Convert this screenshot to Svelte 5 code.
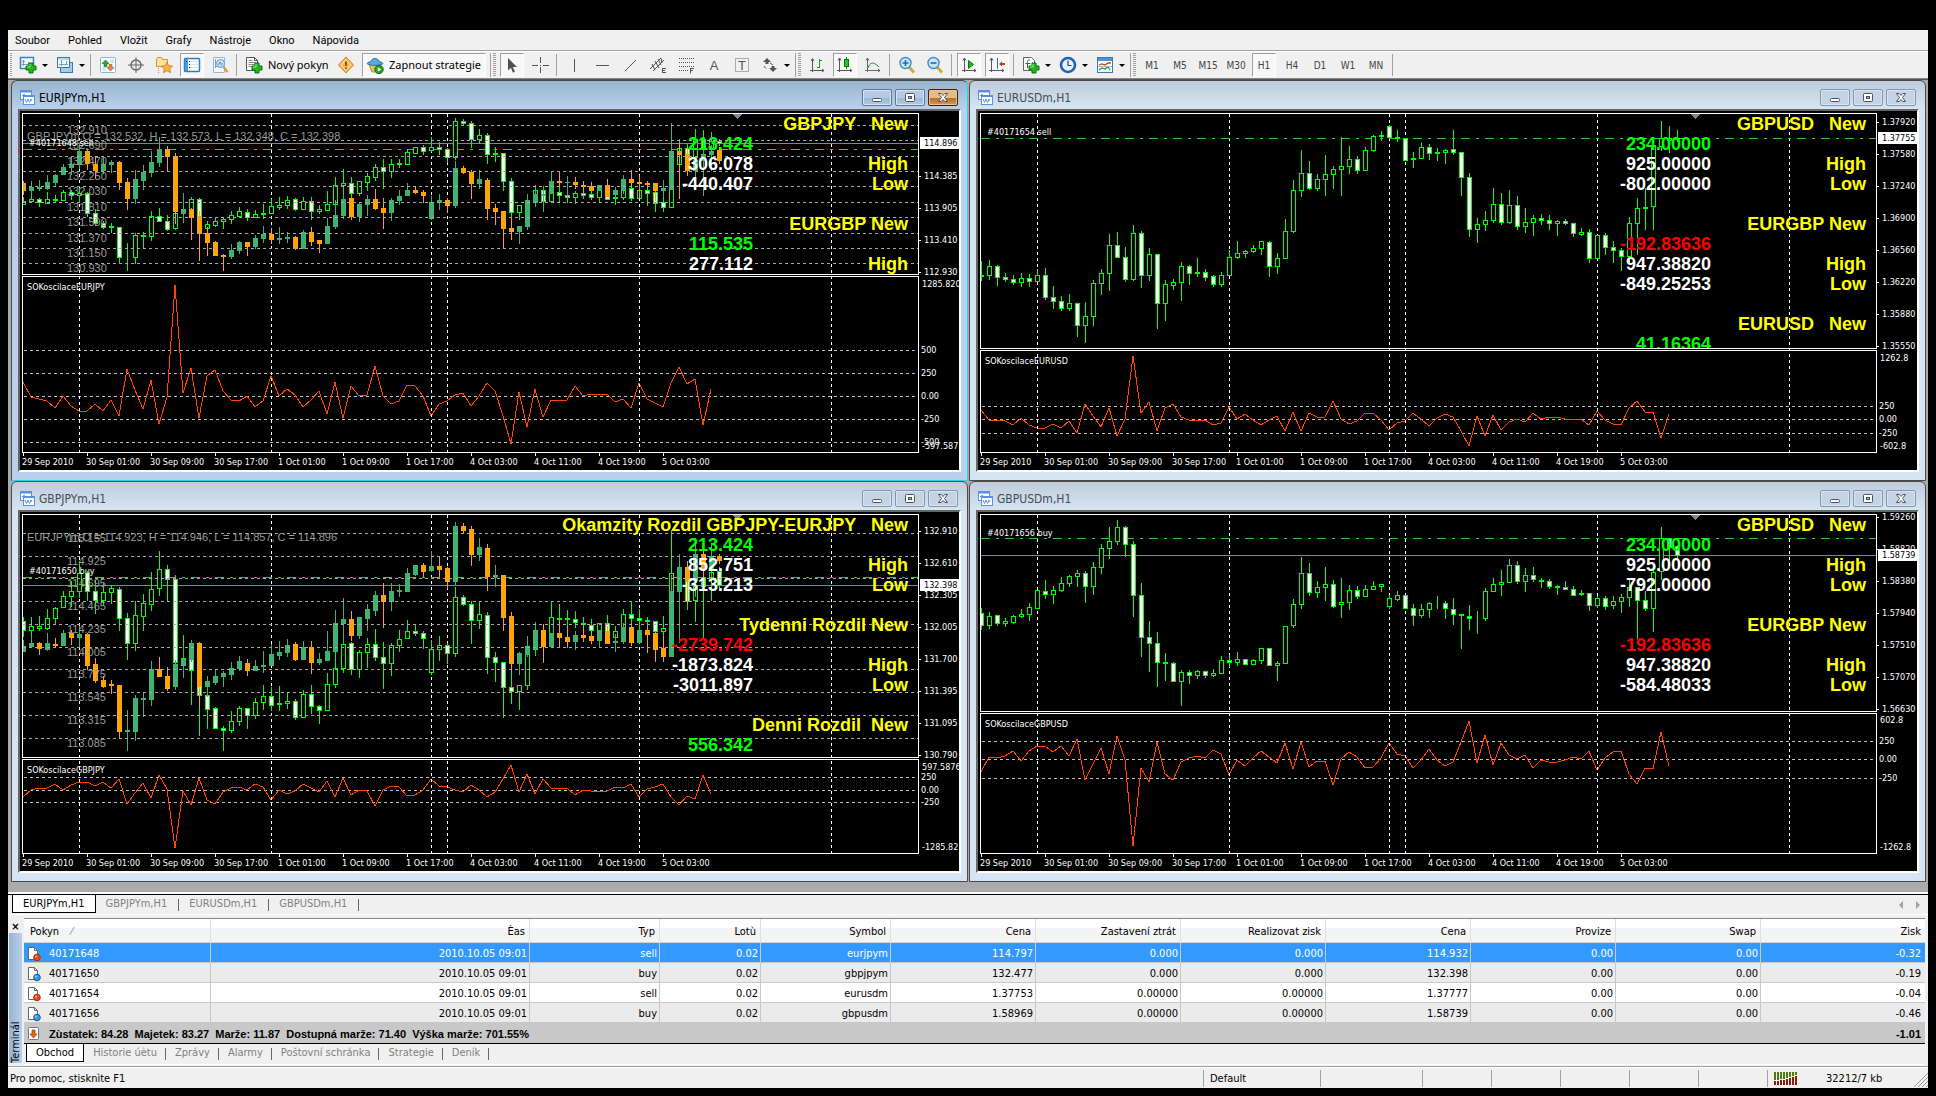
<script>
  // Bars are [high, open, close, low] on the y axis of the chart they were saved from,
  // in steps of a third of a pixel, so a close below its open in number is a rising bar.
  const eurjpy = [
    [480, 515, 500, 515], [465, 500, 489, 500], [486, 489, 506, 524], [459, 507, 489, 510], [475, 492, 495, 502], [450, 495, 459, 495],
    [452, 459, 473, 492], [440, 473, 462, 500], [460, 462, 555, 567], [535, 552, 600, 608], [590, 600, 618, 621], [600, 614, 617, 639],
    [615, 615, 753, 775], [690, 753, 750, 812], [645, 753, 654, 780], [640, 657, 654, 710], [543, 657, 568, 675], [532, 568, 590, 590],
    [562, 588, 624, 630], [540, 620, 553, 627], [500, 553, 538, 593], [481, 538, 489, 545], [486, 489, 620, 683], [588, 620, 603, 650],
    [570, 606, 588, 614], [573, 590, 580, 620], [547, 582, 564, 597], [528, 566, 543, 570], [537, 549, 570, 587], [540, 570, 558, 570],
    [515, 560, 555, 578], [492, 555, 522, 555], [484, 525, 516, 537], [478, 516, 495, 530], [487, 492, 537, 542], [484, 537, 502, 537],
    [484, 501, 546, 581], [520, 546, 537, 552], [453, 540, 513, 542], [390, 515, 430, 515], [355, 430, 417, 490], [394, 417, 465, 480],
    [411, 465, 411, 475], [373, 414, 387, 450], [333, 390, 346, 405], [310, 346, 363, 443], [310, 363, 333, 390], [312, 335, 330, 348],
    [264, 333, 279, 333], [255, 282, 255, 286], [249, 255, 273, 288], [213, 270, 258, 275], [233, 258, 267, 290], [262, 264, 303, 326],
    [126, 303, 138, 312], [129, 138, 150, 160], [140, 147, 222, 255], [175, 222, 201, 240], [192, 204, 288, 330], [257, 288, 285, 320],
    [285, 285, 411, 450], [396, 408, 549, 575], [516, 549, 519, 583], [470, 522, 501, 530], [427, 505, 450, 523], [432, 450, 498, 545],
    [460, 498, 460, 498], [420, 459, 473, 502], [440, 471, 483, 503], [453, 483, 465, 507], [440, 465, 471, 485], [455, 468, 480, 490],
    [450, 480, 452, 502], [440, 453, 489, 489], [463, 488, 483, 513], [430, 483, 441, 490], [440, 441, 486, 497], [450, 486, 450, 486],
    [440, 450, 462, 516], [459, 459, 507, 543], [470, 504, 528, 543], [285, 528, 333, 528], [222, 335, 261, 480], [243, 261, 303, 370],
    [175, 300, 222, 350], [180, 222, 267, 300], [190, 266, 228, 290], [222, 228, 240, 249],
  ];
  const gbpjpy = [
    [411, 423, 452, 470], [411, 452, 439, 465], [408, 445, 439, 452], [387, 445, 415, 449], [381, 415, 384, 432], [335, 382, 349, 382],
    [305, 349, 335, 380], [245, 335, 280, 352], [275, 280, 333, 360], [300, 335, 362, 400], [310, 362, 337, 375], [316, 338, 325, 370],
    [322, 328, 415, 450], [400, 415, 490, 537], [365, 490, 405, 512], [342, 410, 370, 450], [277, 373, 328, 392], [213, 325, 268, 345],
    [255, 268, 298, 365], [287, 298, 548, 600], [467, 555, 536, 593], [533, 536, 572, 672], [548, 570, 645, 765], [620, 645, 688, 745],
    [683, 685, 745, 745], [740, 745, 751, 812], [695, 751, 724, 758], [680, 724, 685, 735], [685, 685, 706, 745], [655, 706, 668, 715],
    [615, 668, 649, 687], [622, 649, 675, 690], [620, 673, 670, 690], [640, 670, 663, 685], [658, 663, 712, 718], [632, 712, 643, 712],
    [617, 643, 680, 700], [676, 679, 692, 731], [580, 692, 613, 692], [500, 613, 565, 622], [470, 565, 493, 577], [488, 490, 568, 583],
    [510, 568, 517, 593], [475, 517, 493, 563], [447, 493, 532, 540], [487, 532, 550, 624], [490, 550, 496, 587], [452, 496, 478, 515],
    [420, 476, 454, 476], [433, 454, 461, 466], [454, 460, 475, 506], [480, 578, 508, 583], [470, 508, 496, 540], [490, 496, 520, 550],
    [323, 520, 352, 530], [345, 352, 373, 376], [365, 373, 421, 491], [365, 421, 403, 446], [397, 406, 532, 581], [517, 532, 547, 605],
    [547, 547, 623, 713], [575, 622, 635, 671], [616, 635, 616, 689], [473, 616, 500, 628], [443, 507, 473, 525], [440, 476, 473, 547],
    [368, 466, 413, 466], [372, 414, 418, 430], [390, 418, 415, 480], [393, 417, 428, 443], [413, 430, 433, 460], [417, 435, 451, 451],
    [430, 452, 430, 452], [405, 430, 478, 478], [439, 472, 454, 490], [387, 452, 403, 465], [365, 403, 415, 440], [387, 415, 421, 490],
    [413, 420, 424, 440], [423, 423, 455, 500], [408, 455, 445, 480], [150, 450, 280, 450], [240, 280, 292, 488], [262, 292, 363, 387],
    [300, 362, 320, 425], [270, 320, 292, 474], [250, 292, 278, 362], [262, 273, 316, 330],
  ];
  const eurusd = [
    [545, 588, 585, 602], [540, 587, 559, 597], [555, 559, 593, 617], [580, 592, 599, 605], [585, 598, 608, 614], [580, 608, 595, 620],
    [583, 595, 605, 620], [568, 605, 586, 605], [565, 586, 653, 659], [618, 652, 665, 684], [648, 664, 686, 692], [642, 686, 670, 690],
    [670, 670, 737, 770], [667, 737, 709, 788], [600, 710, 610, 737], [567, 611, 580, 644], [462, 581, 496, 632], [456, 496, 533, 533],
    [502, 532, 599, 605], [435, 599, 460, 602], [453, 460, 587, 623], [504, 587, 523, 600], [523, 523, 671, 746], [600, 671, 613, 722],
    [597, 616, 607, 629], [546, 607, 559, 662], [556, 559, 581, 614], [534, 577, 580, 590], [568, 577, 593, 602], [585, 589, 614, 620],
    [577, 614, 586, 620], [510, 587, 532, 587], [483, 533, 520, 536], [510, 520, 514, 533], [495, 514, 505, 518], [484, 506, 484, 524],
    [483, 487, 560, 590], [519, 560, 535, 581], [417, 536, 454, 536], [300, 455, 331, 458], [210, 332, 280, 350], [243, 280, 326, 329],
    [283, 326, 298, 332], [225, 299, 283, 345], [258, 284, 268, 326], [172, 269, 259, 347], [198, 260, 238, 281], [228, 238, 272, 281],
    [202, 272, 211, 272], [165, 212, 169, 215], [153, 170, 167, 180], [136, 139, 173, 175], [150, 173, 176, 185], [175, 175, 242, 242],
    [217, 238, 235, 261], [186, 236, 202, 236], [193, 202, 221, 239], [205, 220, 217, 240], [207, 218, 211, 251], [150, 208, 218, 224],
    [217, 217, 293, 347], [280, 292, 449, 470], [415, 449, 433, 486], [393, 433, 420, 450], [324, 422, 373, 426], [340, 373, 428, 434],
    [330, 428, 376, 431], [348, 376, 440, 449], [384, 440, 427, 456], [405, 428, 415, 465], [402, 415, 420, 434], [407, 421, 431, 447],
    [420, 431, 424, 467], [417, 424, 431, 434], [430, 430, 461, 470], [444, 464, 457, 467], [447, 457, 536, 548], [466, 536, 466, 536],
    [460, 466, 503, 524], [484, 502, 512, 548], [505, 511, 530, 570], [411, 530, 430, 548], [354, 431, 385, 522], [325, 385, 382, 447],
    [198, 380, 198, 447], [123, 198, 176, 210], [138, 180, 176, 216], [150, 175, 178, 185],
  ];
  const gbpusd = [
    [385, 400, 437, 447], [397, 437, 409, 446], [405, 406, 431, 437], [415, 431, 424, 440], [405, 426, 409, 430], [388, 410, 403, 413],
    [370, 404, 382, 420], [331, 386, 331, 386], [300, 334, 344, 356], [319, 344, 331, 369], [291, 331, 310, 335], [285, 311, 289, 320],
    [270, 290, 280, 320], [273, 280, 320, 366], [246, 320, 262, 342], [193, 263, 205, 281], [141, 206, 184, 234], [120, 185, 142, 194],
    [138, 142, 194, 230], [183, 193, 347, 410], [310, 346, 473, 528], [423, 472, 491, 573], [456, 490, 548, 620], [519, 547, 550, 600],
    [547, 550, 605, 605], [570, 605, 577, 677], [572, 577, 587, 611], [571, 587, 574, 596], [573, 574, 587, 593], [568, 587, 580, 590],
    [528, 581, 541, 581], [525, 541, 547, 560], [516, 548, 538, 557], [538, 538, 554, 554], [538, 554, 541, 554], [505, 542, 505, 551],
    [505, 505, 557, 557], [543, 557, 550, 602], [439, 551, 439, 551], [358, 437, 373, 443], [231, 374, 280, 386], [249, 280, 338, 347],
    [303, 338, 322, 353], [262, 323, 313, 362], [300, 313, 380, 383], [294, 374, 367, 411], [315, 368, 331, 387], [320, 331, 350, 354],
    [315, 350, 328, 350], [304, 328, 319, 328], [313, 320, 313, 333], [346, 380, 355, 386], [333, 358, 346, 362], [346, 346, 386, 386],
    [373, 385, 407, 435], [372, 407, 388, 413], [366, 388, 370, 411], [350, 371, 370, 384], [364, 370, 386, 416], [354, 388, 402, 432],
    [403, 403, 407, 504], [376, 409, 415, 447], [393, 415, 414, 459], [324, 416, 334, 422], [294, 335, 313, 335], [270, 314, 307, 345],
    [237, 308, 256, 308], [243, 256, 305, 311], [264, 305, 286, 335], [262, 286, 299, 305], [295, 301, 304, 323], [298, 304, 320, 326],
    [315, 322, 319, 342], [303, 321, 328, 328], [318, 327, 347, 347], [330, 343, 340, 347], [340, 340, 377, 392], [348, 377, 355, 383],
    [348, 355, 380, 389], [348, 377, 363, 384], [343, 365, 352, 396], [295, 353, 322, 380], [322, 322, 362, 480], [335, 361, 386, 392],
    [270, 386, 276, 453], [141, 275, 176, 297], [176, 176, 202, 240], [195, 200, 227, 235],
  ];

  const oscJpy = [
    847, 891, 898, 903, 925, 889, 920, 934, 934, 913, 934, 902, 950, 808, 872, 928, 841, 973, 893, 556, 881, 805,
    956, 829, 811, 875, 901, 904, 890, 921, 904, 829, 888, 868, 886, 921, 902, 875, 943, 847, 956, 859, 889, 886,
    799, 890, 913, 904, 856, 858, 890, 950, 914, 904, 887, 880, 918, 889, 850, 875, 950, 1034, 877, 982, 868, 952,
    901, 901, 901, 858, 888, 883, 883, 883, 907, 898, 925, 850, 897, 909, 921, 849, 802, 852, 839, 976, 868,
  ].map((v) => 889 - v);
  const oscUsd = [
    876, 832, 835, 829, 815, 843, 814, 799, 799, 816, 799, 828, 779, 901, 852, 805, 882, 769, 840, 1100, 865, 907,
    787, 884, 901, 847, 835, 829, 835, 811, 823, 886, 840, 858, 835, 815, 833, 850, 790, 868, 787, 861, 845, 845,
    915, 837, 817, 831, 865, 862, 835, 791, 822, 828, 865, 840, 808, 841, 858, 847, 787, 724, 850, 766, 856, 791,
    826, 837, 826, 865, 840, 847, 847, 840, 832, 837, 815, 870, 835, 817, 814, 883, 912, 866, 868, 758, 860,
  ].map((v) => 838 - v);

  const periods = [59, 251, 411, 427, 619, 811];
  const dates = [
    "29 Sep 2010", "30 Sep 01:00", "30 Sep 09:00", "30 Sep 17:00", "1 Oct 01:00", "1 Oct 09:00",
    "1 Oct 17:00", "4 Oct 03:00", "4 Oct 11:00", "4 Oct 19:00", "5 Oct 03:00",
  ];

  const charts = [
    {
      symbol: "EURJPY", active: true, split: 163,
      bars: eurjpy, y: (v) => 116 + (v - 615) / 4.5,
      over: gbpjpy, overY: (v) => 45 + (v - 298) / 4.49,
      grid: [14, 29, 45, 60, 75, 91, 106, 122, 137, 152],
      gridFrom: 132.91, gridStep: 0.22,
      quote: "GBPJPYm,O = 132.532, H = 132.573, L = 132.348, C = 132.398",
      order: "#40171648 sell", orderText: 35, orderLine: 38,
      price: "114.896", priceY: 32, priceLine: true,
      scale: [["114.385", 65], ["113.905", 97], ["113.410", 129], ["112.930", 161]],
      osc: oscJpy, zero: 285, k: 1 / 3,
      levels: [["500", 239], ["250", 262], ["0.00", 285], ["-250", 308], ["-500", 331]],
      ends: [["1285.820", 173], ["-597.587", 335]],
      notes: [
        [0, "GBPJPY   New"], [1, "", "213.424", "up"], [2, "High", "306.078"], [3, "Low", "-440.407"],
        [5, "EURGBP New"], [6, "", "115.535", "up"], [7, "High", "277.112"],
      ],
    },
    {
      symbol: "EURUSD", split: 237,
      bars: eurusd, y: (v) => v / 3 - 31,
      grid: [],
      order: "#40171654 sell", orderText: 24, orderLine: 27,
      price: "1.37755", priceY: 27,
      scale: [
        ["1.37920", 11], ["1.37580", 43], ["1.37240", 75], ["1.36900", 107], ["1.36560", 139],
        ["1.36220", 171], ["1.35880", 203], ["1.35550", 235],
      ],
      osc: oscUsd, zero: 308, k: -0.24,
      levels: [["250", 295], ["0.00", 308], ["-250", 322]],
      ends: [["1262.8", 247], ["-602.8", 335]],
      notes: [
        [0, "GBPUSD   New"], [1, "", "234.00000", "up"], [2, "High", "925.00000"], [3, "Low", "-802.00000"],
        [5, "EURGBP New"], [6, "", "-192.83636", "down"], [7, "High", "947.38820"], [8, "Low", "-849.25253"],
        [10, "EURUSD   New"], [11, "", "41.16364", "up"],
      ],
    },
    {
      symbol: "GBPJPY", split: 245,
      bars: gbpjpy, y: (v) => v / 3 - 32,
      over: eurjpy, overY: (v) => v / 3 - 32,
      grid: [21, 44, 66, 89, 112, 135, 157, 180, 203, 226],
      gridFrom: 115.155, gridStep: 0.23,
      quote: "EURJPYm,O = 114.923, H = 114.946, L = 114.857, C = 114.896",
      order: "#40171650 buy", orderText: 62, orderLine: 65,
      price: "132.398", priceY: 73, priceLine: true,
      scale: [
        ["132.910", 19], ["132.610", 51], ["132.305", 83], ["132.005", 115], ["131.700", 147],
        ["131.395", 179], ["131.095", 211], ["130.790", 243],
      ],
      osc: oscJpy, zero: 278, k: -0.174,
      levels: [["250", 265], ["0.00", 278], ["-250", 290]],
      ends: [["597.5876", 255], ["-1285.82", 335]],
      notes: [
        [0, "Okamzity Rozdil GBPJPY-EURJPY   New"], [1, "", "213.424", "up"], [2, "High", "852.751"], [3, "Low", "-313.213"],
        [5, "Tydenni Rozdil New"], [6, "", "-2739.742", "down"], [7, "High", "-1873.824"], [8, "Low", "-3011.897"],
        [10, "Denni Rozdil  New"], [11, "", "556.342", "up"],
      ],
    },
    {
      symbol: "GBPUSD", split: 199,
      bars: gbpusd, y: (v) => v / 3 - 32,
      grid: [],
      order: "#40171656 buy", orderText: 24, orderLine: 26,
      price: "1.58739", priceY: 43, priceLine: true,
      scale: [
        ["1.59260", 5], ["1.58820", 37], ["1.58380", 69], ["1.57940", 101], ["1.57510", 133],
        ["1.57070", 165], ["1.56630", 197],
      ],
      osc: oscUsd, zero: 247, k: 1 / 3,
      levels: [["250", 229], ["0.00", 247], ["-250", 266]],
      ends: [["602.8", 208], ["-1262.8", 335]],
      notes: [
        [0, "GBPUSD   New"], [1, "", "234.00000", "up"], [2, "High", "925.00000"], [3, "Low", "-792.00000"],
        [5, "EURGBP New"], [6, "", "-192.83636", "down"], [7, "High", "947.38820"], [8, "Low", "-584.48033"],
      ],
    },
  ];

  let widths = $state([939, 939, 939, 939]);

  function candle([high, open, close, low], i, y) {
    const top = Math.floor(y(Math.min(open, close)));
    const bottom = Math.floor(y(Math.max(open, close)));
    const hi = Math.floor(y(high));
    return {
      x: 3 + 8 * i,
      hi,
      len: Math.max(1, Math.floor(y(low)) - hi + 1),
      top,
      h: bottom - top,
      up: close < open,
    };
  }

  const points = (c) => c.osc.map((v, i) => `${3 + 8 * i},${Math.round(c.zero - v * c.k)}`).join(" ");

  const menu = ["Soubor", "Pohled", "Vložit", "Grafy", "Nástroje", "Okno", "Nápovìda"];
  const tools = [
    { n: "newchart", title: "Nový graf", dd: true },
    { n: "profiles", title: "Profily", dd: true },
    { sep: true },
    { n: "market", title: "Tržní hlídka" },
    { n: "target", title: "Datové okno" },
    { n: "navigator", title: "Navigátor" },
    { n: "terminal", title: "Terminál", on: true },
    { n: "tester", title: "Tester strategií" },
    { sep: true },
    { n: "order", label: "Nový pokyn" },
    { n: "warn", title: "MetaEditor" },
    { n: "expert", label: "Zapnout strategie", on: true },
    { grip: true },
    { n: "cursor", title: "Kurzor", on: true },
    { n: "cross", title: "Zamìøovací køíž" },
    { sep: true },
    { n: "vline", title: "Svislá èára" },
    { n: "hline", title: "Vodorovná èára" },
    { n: "trend", title: "Trendová èára" },
    { n: "channel", title: "Kanál" },
    { n: "fibo", title: "Fibonacci" },
    { n: "text", title: "Text" },
    { n: "label", title: "Textový popis" },
    { n: "arrows", title: "Šipky", dd: true },
    { grip: true },
    { n: "bars", title: "Sloupcový graf" },
    { n: "candles", title: "Svíèkový graf", on: true },
    { n: "line", title: "Èárový graf" },
    { sep: true },
    { n: "zoomin", title: "Zvìtšit" },
    { n: "zoomout", title: "Zmenšit" },
    { sep: true },
    { n: "scroll", title: "Automatický posun", on: true },
    { n: "shift", title: "Odsazení grafu", on: true },
    { sep: true },
    { n: "indicators", title: "Indikátory", dd: true },
    { n: "clock", title: "Periody", dd: true },
    { n: "templates", title: "Šablony", dd: true },
    { grip: true },
    { frame: "M1" }, { frame: "M5" }, { frame: "M15" }, { frame: "M30" }, { frame: "H1", on: true },
    { frame: "H4" }, { frame: "D1" }, { frame: "W1" }, { frame: "MN" },
    { sep: true },
  ];

  const columns = [
    ["Pokyn", 187], ["Èas", 319], ["Typ", 130], ["Lotù", 101], ["Symbol", 130], ["Cena", 145],
    ["Zastavení ztrát", 145], ["Realizovat zisk", 145], ["Cena", 145], ["Provize", 145], ["Swap", 145], ["Zisk", 0],
  ];
  const orders = [
    ["40171648", "2010.10.05 09:01", "sell", "0.02", "eurjpym", "114.797", "0.000", "0.000", "114.932", "0.00", "0.00", "-0.32"],
    ["40171650", "2010.10.05 09:01", "buy", "0.02", "gbpjpym", "132.477", "0.000", "0.000", "132.398", "0.00", "0.00", "-0.19"],
    ["40171654", "2010.10.05 09:01", "sell", "0.02", "eurusdm", "1.37753", "0.00000", "0.00000", "1.37777", "0.00", "0.00", "-0.04"],
    ["40171656", "2010.10.05 09:01", "buy", "0.02", "gbpusdm", "1.58969", "0.00000", "0.00000", "1.58739", "0.00", "0.00", "-0.46"],
  ];
  const panels = ["Obchod", "Historie úètu", "Zprávy", "Alarmy", "Poštovní schránka", "Strategie", "Deník"];
  const mdiTabs = ["EURJPYm,H1", "GBPJPYm,H1", "EURUSDm,H1", "GBPUSDm,H1"];

  let selected = $state(0);
  let panel = $state(0);
</script>

{#snippet plus(x, y)}
  <path d="M{x + 3} {y}h4v3h3v4h-3v3h-4v-3h-3v-4h3z" fill="#1fb81f" stroke="#087008" />
  <path d="M{x + 4} {y + 1}v3h-3" fill="none" stroke="#8bef7b" />
{/snippet}

{#snippet icon(n)}
  <svg class="icon" width="18" height="18" viewBox="0 0 18 18" aria-hidden="true">
    {#if n === "newchart"}
      <rect x="1.5" y="1.5" width="13" height="11" fill="#f4f9fe" stroke="#3f7fb8" stroke-width="1.500" />
      <path d="M4.5 4v6M2.5 8.500h9M9.500 6v4M3 5.500h3" fill="none" stroke="#7d9cb8" />
      {@render plus(7, 7)}
    {:else if n === "profiles"}
      <rect x="4.500" y="6.500" width="12" height="10" fill="#a9cbe9" stroke="#3a78b5" />
      <rect x="1.500" y="1.500" width="12" height="10" fill="#f4f9fe" stroke="#3a78b5" />
      <path d="M2 3h11" stroke="#7db1e0" />
      <path d="M5.500 4v6M3 8.500h9M10.500 5v4" stroke="#7d9cb8" />
    {:else if n === "market"}
      <rect x="1.500" y="1.500" width="15" height="15" rx="1" fill="#fbfdfe" stroke="#84b6d8" />
      <path d="M11 4h4M11 6h4M3 12h4M3 14h4" stroke="#b9cfdf" />
      <path d="M6.500 4l3.500 3.500h-2v3h-3v-3H3z" fill="#2fa52f" stroke="#14701a" stroke-width=".6" />
      <path d="M11.500 15l-3.500-3.500h2v-3h3v3h2z" fill="#f08a2c" stroke="#a85310" stroke-width=".6" />
    {:else if n === "target"}
      <circle cx="9" cy="9" r="5" fill="none" stroke="#666" stroke-width="1.400" />
      <path d="M9 1v16M1 9h16" stroke="#666" />
    {:else if n === "navigator"}
      <path d="M1.500 3.500l1-2h4l1 2h5v7h-11z" fill="#fbe29b" stroke="#c9973a" />
      <path d="M3.500 12v5" stroke="#c77" stroke-dasharray="1 1" />
      <path d="M12 6l1.700 3.700 4 .4-3 2.700.9 4-3.600-2.100-3.600 2.100.9-4-3-2.700 4-.4z" fill="#fbb040" stroke="#cf7d14" stroke-width=".8" />
    {:else if n === "terminal"}
      <rect x="1.500" y="2.500" width="15" height="13" rx="1" fill="#fff" stroke="#2b7bc9" stroke-width="1.500" />
      <rect x="2" y="3" width="3" height="12" fill="#4a9ae0" />
      <path d="M7 5.500h8M7 8.500h8M7 11.500h8" stroke="#d5e3ee" />
      <path d="M3.500 5v1M6.500 5v1M6.500 8v1M6.500 11v1" stroke="#222" />
    {:else if n === "tester"}
      <path d="M2.500 1.500h11v15h-11z" fill="#f7fafc" stroke="#9fb6c9" />
      <path d="M4.500 3v9M4 10.500h8" stroke="#7d9cb8" />
      <circle cx="9.500" cy="7.500" r="4" fill="#bcdff7" fill-opacity=".8" stroke="#5c9fd0" />
      <path d="M7.500 9l1.500-3 1.500 3 1-2" fill="none" stroke="#5577aa" stroke-width=".8" />
      <path d="M12.500 11l4 5" stroke="#d99a38" stroke-width="2.200" />
    {:else if n === "order"}
      <path d="M1.500 1.500h8l3 3v10h-11z" fill="#fff" stroke="#555" />
      <path d="M9.500 1.500v3h3" fill="none" stroke="#555" />
      <path d="M3.500 4.500h4M3.500 6.500h7M3.500 8.500h7M3.500 10.500h5" stroke="#8a8a8a" />
      {@render plus(7, 7)}
    {:else if n === "warn"}
      <path d="M9 1l7.500 8L9 17 1.500 9z" fill="#f9b95a" stroke="#c9801c" />
      <path d="M9 3.500l5 5.500L9 14.500 4 9z" fill="none" stroke="#fde0ad" />
      <path d="M9 5.500v4.500M9 11.500v1.500" stroke="#6b4308" stroke-width="1.600" />
    {:else if n === "expert"}
      <path d="M3 8h12l-2 8H6z" fill="#f3c15c" stroke="#c08a26" />
      <path d="M1 7.500c2 2.500 14 2.500 16 0-1-2-3-1-4-2-.5-4-7.500-4-8 0-1 1-3 0-4 2z" fill="#5fa8dd" stroke="#2b6fa8" />
      <circle cx="13" cy="13.500" r="4.200" fill="#22a822" stroke="#0d6f10" />
      <path d="M11.800 11.200v4.600l3.500-2.300z" fill="#fff" />
    {:else if n === "cursor"}
      <path d="M5 2l9 9H9.800l2.200 4.800-2 .9-2.200-4.900L5 14.500z" fill="#505050" />
    {:else if n === "cross"}
      <path d="M9.500 1v6M9.500 11v6M1 9.500h6M12 9.500h6M9 9.500h1" stroke="#555" />
    {:else if n === "vline"}
      <path d="M9.500 3v13" stroke="#555" />
    {:else if n === "hline"}
      <path d="M3 9.500h13" stroke="#555" />
    {:else if n === "trend"}
      <path d="M4 15L15 4" stroke="#555" />
    {:else if n === "channel"}
      <path d="M1 13L12 2M4 15L15 4M3 8l3 6M6 5l4 7M9 3l3 6M12 2l1 5" stroke="#555" />
      <path d="M13.500 12v5M13 12.500h4M13 14.500h3M13 16.500h4" stroke="#555" />
    {:else if n === "fibo"}
      <path d="M2 2.500h15M2 6.500h15M2 10.500h15M2 14.500h9" stroke="#555" stroke-dasharray="1 1" />
      <path d="M13.500 12v5.500M13 12.500h4M13 14.500h3" stroke="#555" />
    {:else if n === "text"}
      <text x="9" y="14" class="glyph">A</text>
    {:else if n === "label"}
      <rect x="2.500" y="2.500" width="13" height="13" fill="none" stroke="#666" stroke-dasharray="1 1" />
      <text x="9" y="14" class="glyph">T</text>
    {:else if n === "arrows"}
      <path d="M6 2l4 4H7.500v2h-3V6H2z" fill="#555" />
      <path d="M12 16l-4-4h2.500v-2h3v2H16z" fill="#555" />
      <path d="M3 10l2 2.500M9 7l3 2" stroke="#555" />
    {:else if n === "bars"}
      <path d="M4.500 3v13M2 14.500h14M3 5l1.500-2.500L6 5M14 13l2 1.500-2 1.500" fill="none" stroke="#555" />
      <path d="M11.500 3v9M11 4.500h3M9 11.500h3" stroke="#1c9b1c" />
    {:else if n === "candles"}
      <path d="M3.500 2v14M1 14.500h15M2 4.500l1.500-2.500 1.500 2.500M14 13l2 1.500-2 1.500" fill="none" stroke="#555" />
      <path d="M10.500 1v12" stroke="#0b7a0b" />
      <rect x="8.500" y="3.500" width="4" height="7" fill="#27c327" stroke="#0b7a0b" />
    {:else if n === "line"}
      <path d="M3.500 2v14M1 14.500h15M2 4.500l1.500-2.500 1.500 2.500M14 13l2 1.500-2 1.500" fill="none" stroke="#666" />
      <path d="M4 12c2-6 5-7 11-1" fill="none" stroke="#1c9b1c" />
    {:else if n === "zoomin" || n === "zoomout"}
      <path d="M11 11l5 5.500" stroke="#dca23c" stroke-width="2.800" />
      <circle cx="7.500" cy="7" r="5.500" fill="#c8e6fa" stroke="#3f8ccb" stroke-width="1.400" />
      <path d={n === "zoomin" ? "M4.500 7h6M7.500 4v6" : "M4.500 7h6"} stroke="#2468a8" stroke-width="1.600" />
    {:else if n === "scroll"}
      <path d="M4.500 2v14M2 14.500h14M3 4.500l1.500-2.500 1.500 2.500M14 13l2 1.500-2 1.500" fill="none" stroke="#555" />
      <path d="M8.500 4.500l5 4-5 4z" fill="#27b327" stroke="#0b7a0b" />
    {:else if n === "shift"}
      <path d="M3.500 2v14M1 14.500h15M2 4.500l1.500-2.500 1.500 2.500M14 13l2 1.500-2 1.500" fill="none" stroke="#555" />
      <path d="M9.500 2v11" stroke="#2b6fc0" />
      <path d="M11 8l3-2.500v1.500h3v2h-3v1.500z" fill="#c43a12" />
    {:else if n === "indicators"}
      <path d="M1.500 1.500h8l3 3v10h-11z" fill="#fff" stroke="#666" />
      <path d="M8 4c-2-1-2.500 1-2.500 3v5M3.500 7.500h5" fill="none" stroke="#555" />
      {@render plus(7, 7)}
    {:else if n === "clock"}
      <circle cx="9" cy="9" r="7" fill="#e6f3fd" stroke="#1f62b5" stroke-width="2.600" />
      <path d="M9 4.500V9.500h3.500" fill="none" stroke="#27496b" stroke-width="1.200" />
    {:else if n === "templates"}
      <rect x="1.500" y="1.500" width="15" height="15" fill="#fff" stroke="#3a78b5" />
      <rect x="2" y="2" width="14" height="3" fill="#4c95d8" />
      <path d="M3 9l3-1 3 1 3-2 3 0" fill="none" stroke="#c0401c" stroke-width="1.300" />
      <path d="M3 14l3-2 3 1 3-2 2 3" fill="none" stroke="#1f9a2b" stroke-width="1.300" />
      <path d="M2 10.500h14" stroke="#9fbdd6" />
    {/if}
  </svg>
{/snippet}

{#snippet chart(c, w)}
  <rect width={w} height="359" fill="#000" />
  <clipPath id="main-{c.symbol}"><rect x="3" y="3" width={w - 44} height={c.split - 3} /></clipPath>
  <g shape-rendering="crispEdges">
    {#each c.levels as [, y]}
      <line class="level" x1="4" x2={w - 41} y1={y + 0.5} y2={y + 0.5} />
    {/each}
    <polyline points={points(c)} fill="none" stroke="#ff4500" />
    {#each periods as x}
      <line class="period" x1={x + 0.5} x2={x + 0.5} y1="3" y2="341" />
    {/each}
  </g>
  <g clip-path="url(#main-{c.symbol})" shape-rendering="crispEdges">
    {#if c.priceLine}
      <line x1="3" x2={w} y1={c.priceY + 0.5} y2={c.priceY + 0.5} stroke="#778899" />
    {/if}
    <line class="order-line" x1="3" x2={w} y1={c.orderLine + 0.5} y2={c.orderLine + 0.5} />
    {#each c.bars as bar, i}
      {@const b = candle(bar, i, c.y)}
      <rect x={b.x} y={b.hi} width="1" height={b.len} fill="#0f0" />
      <rect x={b.x - 1.5} y={b.top + 0.5} width="4" height={b.h} fill={b.up ? "#000" : "#fff"} stroke="#0f0" />
    {/each}
    {#if c.over}
      {#each c.over as bar, i}
        {@const b = candle(bar, i, c.overY)}
        <g fill={b.up ? "#3cb371" : "#ffa500"}>
          <rect x={b.x} y={b.hi} width="1" height={b.len} />
          <rect x={b.x - 2} y={b.top} width="5" height={b.h + 1} />
        </g>
      {/each}
    {/if}
    {#each c.grid as y}
      <line class="grid" x1="3" x2={w} y1={y + 0.5} y2={y + 0.5} />
    {/each}
    <path d="M{w - 226} 3h9l-4.500 5z" fill="#778899" />
  </g>
  <g clip-path="url(#main-{c.symbol})">
    {#each c.grid as y, i}
      <text class="mark" x="47" y={y + 9}>{(c.gridFrom - i * c.gridStep).toFixed(3)}</text>
    {/each}
    {#if c.quote}
      <text class="mark" x="7" y="29">{c.quote}</text>
    {/if}
    <text class="small" x="9" y={c.orderText}>{c.order}</text>
    {#each c.notes as [row, label, value, tone]}
      {#if label}
        <text class="note" x={w - 51} y={19 + 20 * row}>{label}</text>
      {/if}
      {#if value}
        <text class="note value {tone}" x={w - 206} y={19 + 20 * row}>{value}</text>
      {/if}
    {/each}
  </g>
  <text class="small" x="7" y={c.split + 16}>SOKoscilace{c.symbol}</text>
  <g fill="none" stroke="#fff" shape-rendering="crispEdges">
    <rect x="2.5" y="2.5" width={w - 43} height={c.split - 2} />
    <rect x="2.5" y={c.split + 2.5} width={w - 43} height={339 - c.split} />
    {#each dates as _, i}
      <path d="M{3.5 + 64 * i} 342v3" />
    {/each}
    {#each c.scale as [, y]}
      <path d="M{w - 40} {y + 0.5}h2" />
    {/each}
  </g>
  {#each dates as date, i}
    <text class="small" x={2 + 64 * i} y="354">{date}</text>
  {/each}
  {#each c.scale as [label, y]}
    <text class="small" x={w - 35} y={y + 3}>{label}</text>
  {/each}
  {#each c.levels as [label, y]}
    <text class="small" class:zero={label === "0.00"} x={w - 38} y={y + 3}>{label}</text>
  {/each}
  {#each c.ends as [label, y]}
    <text class="small" x={w - 37} y={y + 3}>{label}</text>
  {/each}
  <rect x={w - 39} y={c.priceY - 6} width="39" height="12" fill="#fff" />
  <text class="small dark" x={w - 35} y={c.priceY + 3}>{c.price}</text>
{/snippet}

<main>
  <nav class="menu">
    {#each menu as item}
      <button>{item}</button>
    {/each}
  </nav>

  <div class="toolbar" role="toolbar" aria-label="MetaTrader">
    <span class="grip first"></span>
    {#each tools as t}
      {#if t.sep}
        <span class="sep"></span>
      {:else if t.grip}
        <span class="grip"></span>
      {:else if t.frame}
        <button class="tool frame" class:on={t.on}>{t.frame}</button>
      {:else}
        <button class="tool {t.label ? t.n : ''}" class:dd={t.dd} class:wide={t.label} class:on={t.on} title={t.title}>
          {@render icon(t.n)}
          {#if t.label}<span>{t.label}</span>{/if}
          {#if t.dd}<span class="arrow"></span>{/if}
        </button>
      {/if}
    {/each}
  </div>

  <div class="mdi">
    {#each charts as c, i}
      <section class="window" class:active={c.active}>
        <header>
          <svg class="icon" width="15" height="15" viewBox="0 0 15 15" aria-hidden="true">
            <rect x=".5" y=".5" width="11" height="9" fill="#fff" stroke="#5a91e0" />
            <path d="M1 1.500h10" stroke="#5a91e0" stroke-width="2" />
            <path d="M2 5.500h1l1-1.500 1 2.500 1-1" fill="none" stroke="#5a91e0" />
            <rect x="3.500" y="5.500" width="11" height="9" fill="#fff" stroke="#5a91e0" />
            <path d="M4 6.500h10" stroke="#5a91e0" />
            <path d="M5 9l1.500 3.500L8 9l1.500 3.500L11 9l1 2" fill="none" stroke="#5a91e0" />
          </svg>
          <h2>{c.symbol}m,H1</h2>
          <button class="caption" aria-label="Minimalizovat">
            <svg width="12" height="12" viewBox="0 0 12 12"><rect x="1.500" y="6.500" width="9" height="3" rx="1" fill="#fff" stroke="#4c5064" /></svg>
          </button>
          <button class="caption" aria-label="Maximalizovat">
            <svg width="12" height="12" viewBox="0 0 12 12">
              <rect x="1.500" y="1.500" width="9" height="8" rx="1" fill="#fff" stroke="#4c5064" />
              <rect x="4.500" y="4.500" width="3" height="2" fill="#9fb4cc" stroke="#4c5064" />
            </svg>
          </button>
          <button class="caption close" aria-label="Zavøít">
            <svg width="12" height="12" viewBox="0 0 12 12">
              <path d="M1.500 1.500h2.700l1.800 2 1.800-2h2.700L7.500 5.500l3 4H7.800L6 7.500l-1.800 2H1.500l3-4z" fill="#fff" stroke="#4c5064" />
            </svg>
          </button>
        </header>
        <div class="client">
          <div class="canvas" bind:clientWidth={widths[i]}>
            <svg width="100%" height="359" role="img" aria-label="{c.symbol}m,H1">
              {@render chart(c, widths[i])}
            </svg>
          </div>
        </div>
      </section>
    {/each}
  </div>

  <div class="mditabs">
    {#each mdiTabs as tab, i}
      <button class:current={i === 0}>{tab}</button>
    {/each}
    <span class="scrollers">
      <svg width="24" height="8" viewBox="0 0 24 8"><path d="M5 0v8L1 4zM18 0v8l4-4z" fill="#a0a0a0" /></svg>
    </span>
  </div>

  <section class="terminal">
    <aside>
      <button class="x" aria-label="Zavøít terminál">×</button>
      <h2>Terminál</h2>
    </aside>
    <div class="pane">
      <table>
        <colgroup>
          {#each columns as [, width]}
            <col style:width={width ? `${width}px` : "auto"} />
          {/each}
        </colgroup>
        <thead>
          <tr>
            {#each columns as [name], i}
              <th>{name}{#if i === 0}<span class="sort">⁄</span>{/if}</th>
            {/each}
          </tr>
        </thead>
        <tbody>
          {#each orders as row, r}
            <tr class:selected={selected === r} onclick={() => (selected = r)}>
              {#each row as cell, i}
                <td>
                  {#if i === 0}
                    <svg class="icon" width="16" height="16" viewBox="0 0 16 16" aria-hidden="true">
                      <path d="M2.500 1.500h6l3 3v9h-9z" fill="#fff" stroke="#666" />
                      <path d="M8.500 1.500v3h3" fill="none" stroke="#666" />
                      <circle cx="11" cy="11.500" r="3.300" fill={row[2] === "sell" ? "#f04a10" : "#2f95ea"} stroke={row[2] === "sell" ? "#a52c04" : "#135a9c"} />
                      <circle cx="10" cy="10.500" r="1" fill="#fff" fill-opacity=".6" />
                    </svg>
                  {/if}
                  {cell}
                </td>
              {/each}
            </tr>
          {/each}
        </tbody>
        <tfoot>
          <tr>
            <td colspan="11">
              <svg class="icon" width="16" height="16" viewBox="0 0 16 16" aria-hidden="true">
                <rect x="2.500" y="1.500" width="10" height="12" rx="1" fill="#fff" stroke="#777" />
                <path d="M7.500 12L4 8h2V4h3v4h2z" fill="#e8641c" stroke="#9c3a06" stroke-width=".7" />
              </svg>
              Zùstatek: 84.28&nbsp; Majetek: 83.27&nbsp; Marže: 11.87&nbsp; Dostupná marže: 71.40&nbsp; Výška marže: 701.55%
            </td>
            <td>-1.01</td>
          </tr>
        </tfoot>
      </table>
      <div class="panels">
        {#each panels as p, i}
          <button class:current={panel === i} onclick={() => (panel = i)}>{p}</button>
        {/each}
      </div>
    </div>
  </section>

  <footer>
    <span class="help">Pro pomoc, stisknìte F1</span>
    <span class="cell w117">Default</span>
    <span class="cell w102"></span>
    <span class="cell w69"></span>
    <span class="cell w69"></span>
    <span class="cell w69"></span>
    <span class="cell w69"></span>
    <span class="cell w69"></span>
    <span class="cell traffic">
      <svg width="23" height="13" viewBox="0 0 23 13" aria-hidden="true" shape-rendering="crispEdges">
        {#each [8, 8, 7, 7, 6, 5, 4, 3] as h, i}
          <rect x={3 * i} y="0" width="2" height={h} fill="#4f7a12" />
          <rect x={3 * i} y={h + 1} width="2" height={12 - h} fill="#8c1d0c" />
        {/each}
      </svg>
      <span>32212/7 kb</span>
      <svg class="resize" width="14" height="14" viewBox="0 0 14 14" aria-hidden="true">
        <path d="M0 14L14 0M4 14L14 4M8 14l6-6M12 14l2-2" stroke="#999" />
      </svg>
    </span>
  </footer>
</main>

<style>
  :global(body) {
    background: #000;
  }

  main {
    margin: 30px 8px 8px;
    background: #f0f0f0;
    color: #000;
    font: 11px/14px "DejaVu Sans Condensed", "Noto Sans", sans-serif;
    overflow: hidden;
  }

  button {
    margin: 0;
    padding: 0;
    border: 0;
    background: none;
    color: inherit;
    font: inherit;
    white-space: nowrap;
  }

  h2 {
    margin: 0;
    font-weight: normal;
  }

  .menu {
    display: flex;
    gap: 18px;
    box-sizing: border-box;
    height: 21px;
    padding: 2px 7px 0;
    border-bottom: 1px solid #a0a0a0;
    font-family: Roboto, "Noto Sans", sans-serif;
  }

  /* toolbar */
  .toolbar {
    display: flex;
    align-items: center;
    gap: 4px;
    height: 26px;
    border-top: 1px solid #fff;
    border-bottom: 1px solid #888;
    font-family: "Noto Sans", sans-serif;
  }

  .grip {
    flex: none;
    width: 6px;
    height: 24px;
    box-sizing: border-box;
    border-left: 1px solid #a0a0a0;
    background: repeating-linear-gradient(#a0a0a0 0 1px, transparent 1px 2px) 2px 0 / 3px 100% no-repeat;
  }

  .grip.first {
    width: 4px;
    border-left: 0;
    background-position: 2px 0;
  }

  .sep {
    flex: none;
    width: 1px;
    height: 22px;
    margin-right: 1px;
    background: #a0a0a0;
  }

  .tool {
    display: flex;
    flex: none;
    align-items: center;
    justify-content: center;
    box-sizing: border-box;
    width: 24px;
    height: 24px;
  }

  .tool.dd {
    justify-content: space-between;
    width: 33px;
    padding: 0 1px 0 3px;
  }

  .tool.wide {
    justify-content: flex-start;
    gap: 5px;
    padding: 0 3px;
  }

  .tool.order {
    width: 88px;
  }

  .tool.expert {
    width: 124px;
  }

  .tool.on {
    border: 1px solid;
    border-color: #a0a0a0 #fff #fff #a0a0a0;
    background: #f8f8f8;
  }

  .tool.frame {
    padding-top: 2px;
    color: #444;
    font-family: "DejaVu Sans Condensed", "Noto Sans", sans-serif;
    font-size: 10px;
  }

  .arrow {
    border: 3px solid transparent;
    border-top-color: #000;
    border-bottom: 0;
  }

  .icon {
    display: block;
    flex: none;
  }

  .glyph {
    fill: #555;
    font: 13px "Liberation Sans", sans-serif;
    text-anchor: middle;
  }

  /* chart windows */
  .mdi {
    display: grid;
    grid-template-columns: 1fr 1fr;
    column-gap: 1px;
    padding: 0 2px 12px 3px;
    border-top: 1px solid #555;
    background: #ababab;
  }

  .window {
    min-width: 0;
    padding: 0 6px 8px;
    border: 1px solid #4a4a4a;
    border-radius: 6px 6px 0 0;
    background: linear-gradient(#bfcddb, #d7e4f2 28px);
  }

  .window.active {
    border-right-color: #2ad4ee;
    border-bottom-color: #2ad4ee;
    background: linear-gradient(#99b4d1, #b9d1ea 28px);
  }

  .window header {
    display: flex;
    align-items: center;
    gap: 3px;
    height: 28px;
    padding: 5px 3px 0 2px;
    box-sizing: border-box;
  }

  .window h2 {
    flex: 1;
    padding-left: 1px;
    color: #434e54;
    font-size: 12px;
  }

  .window.active h2 {
    color: #000;
  }

  .caption {
    display: flex;
    align-items: center;
    justify-content: center;
    box-sizing: border-box;
    width: 30px;
    height: 17px;
    border: 1px solid #8296b4;
    border-radius: 2px;
    background: #c5d3e3;
    box-shadow: inset 0 0 0 1px #dbe5f0;
  }

  .active .caption {
    border-color: #5f7590;
    background: linear-gradient(#b5cbe4 50%, #9ab5d3 50%, #b3cbe6);
  }

  .active .close {
    border-color: #4a1c10;
    background: linear-gradient(#e3bd85 50%, #b06c22 50%, #d89c4b);
    box-shadow: inset 0 0 0 1px #e6c590;
  }

  .client {
    border: 2px solid #fff;
    border-top-color: #666;
    border-left-color: #666;
  }

  .canvas {
    overflow: hidden;
  }

  .canvas svg {
    display: block;
  }

  .period {
    stroke: #fff;
    stroke-dasharray: 3 3;
  }

  .grid {
    stroke: #a9a9a9;
    stroke-dasharray: 3 3;
  }

  .level {
    stroke: #c0c0c0;
    stroke-dasharray: 3 3;
  }

  .order-line {
    stroke: #32cd32;
    stroke-dasharray: 9 6 3 6;
  }

  .small {
    fill: #fff;
    font: 9px "DejaVu Sans Condensed", "Noto Sans", sans-serif;
  }

  .small.dark {
    fill: #000;
  }

  .small.zero::first-letter {
    font-weight: bold;
  }

  .mark {
    fill: #999;
    font: 11px "Liberation Sans", sans-serif;
  }

  .note {
    fill: #ff0;
    font: bold 18px "Liberation Sans", sans-serif;
    text-anchor: end;
    white-space: pre;
  }

  .note.value {
    fill: #fff;
  }

  .note.up {
    fill: #0f0;
  }

  .note.down {
    fill: #f00;
  }

  /* chart tabs */
  .mditabs {
    display: flex;
    height: 19px;
    padding: 0 4px;
    border-top: 1px solid #000;
    border-bottom: 1px solid #fff;
    box-shadow: 0 -2px #fff;
    color: #808080;
  }

  .mditabs button {
    position: relative;
    height: 18px;
    padding: 0 12px 0 10px;
  }

  .mditabs button:not(.current)::after,
  .panels button:not(.current)::after {
    position: absolute;
    top: 4px;
    right: 0;
    width: 1px;
    height: 12px;
    background: #666;
    content: "";
  }

  .mditabs .current,
  .panels .current {
    height: 18px;
    border: 1px solid #000;
    border-top: 0;
    background: #fff;
    color: #000;
  }

  .mditabs .current {
    padding: 0 10px;
  }

  .scrollers {
    margin: 4px 2px 0 auto;
  }

  /* terminal */
  .terminal {
    display: flex;
    padding: 3px 3px 1px 1px;
    border-bottom: 1px solid #a0a0a0;
  }

  aside {
    display: flex;
    flex-direction: column;
    width: 13px;
    margin: 2px 2px 2px 0;
  }

  .x {
    height: 13px;
    font-weight: bold;
    line-height: 10px;
  }

  aside h2 {
    flex: 1;
    width: 13px;
    background: linear-gradient(90deg, #b9d1ea, #99b4d1);
    font-size: 11px;
    line-height: 13px;
    text-align: left;
    writing-mode: vertical-rl;
    rotate: 180deg;
  }

  .pane {
    flex: 1;
    min-width: 0;
    border-top: 1px solid #888;
    border-bottom: 1px solid #fff;
  }

  table {
    width: 100%;
    border-collapse: separate;
    border-spacing: 0;
    table-layout: fixed;
    background: #fff;
  }

  th {
    height: 24px;
    box-sizing: border-box;
    padding: 3px 4px 0;
    border-right: 1px solid #dedfe1;
    border-bottom: 1px solid #d5d5d5;
    background: linear-gradient(#fff 40%, #f3f4f6 40%);
    font-weight: normal;
    text-align: right;
  }

  th:first-child {
    padding-left: 6px;
    text-align: left;
  }

  .sort {
    margin-left: 12px;
    color: #888;
  }

  td {
    height: 20px;
    box-sizing: border-box;
    padding: 2px 2px 0;
    border-right: 1px solid #c8c8c8;
    border-bottom: 1px solid #c8c8c8;
    text-align: right;
    white-space: nowrap;
  }

  td:first-child {
    text-align: left;
  }

  td:last-child,
  th:last-child {
    padding-right: 4px;
    border-right: 0;
  }

  td .icon {
    float: left;
    margin: -1px 7px -1px 0;
  }

  tbody tr:nth-child(even) td {
    background: #ebebeb;
  }

  tbody tr.selected td {
    background: #3399ff;
    color: #fff;
  }

  tfoot td {
    border-color: #c8c8c8;
    background: #c8c8c8;
    font: bold 11px/14px "Liberation Sans", sans-serif;
  }

  .panels {
    display: flex;
    height: 20px;
    padding: 0 2px;
    border-top: 1px solid #000;
    color: #808080;
  }

  .panels button {
    position: relative;
    height: 18px;
    padding: 0 9px;
  }

  /* status bar */
  footer {
    display: flex;
    height: 20px;
    border-top: 1px solid #fff;
    line-height: 22px;
  }

  .help {
    flex: 1;
    padding-left: 2px;
  }

  .cell {
    box-sizing: border-box;
    height: 17px;
    margin-top: 2px;
    padding-left: 6px;
    border-left: 1px solid #a0a0a0;
    line-height: 18px;
  }

  .w117 {
    width: 117px;
  }

  .w102 {
    width: 102px;
  }

  .w69 {
    width: 69px;
  }

  .traffic {
    display: flex;
    align-items: center;
    gap: 29px;
    width: 161px;
  }

  .resize {
    align-self: flex-end;
    margin-left: auto;
  }
</style>
